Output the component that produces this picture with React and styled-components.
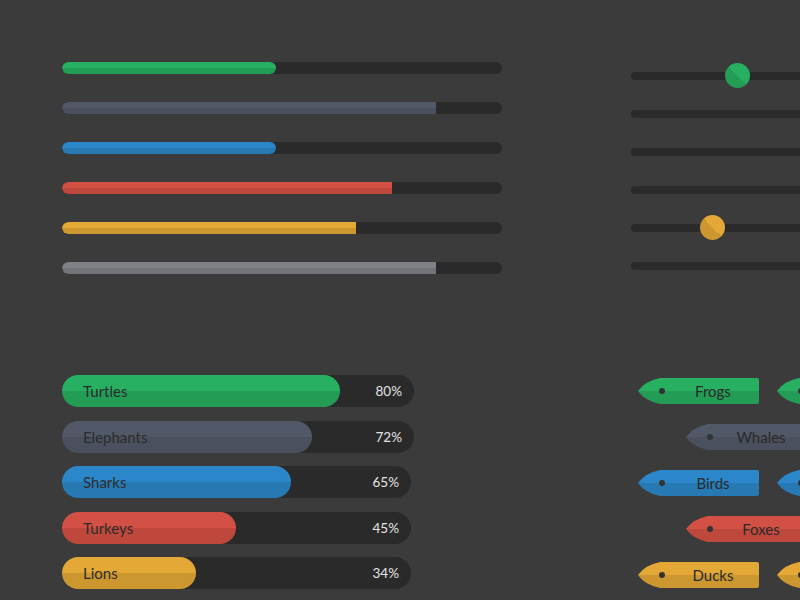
import React from 'react';
import styled, { createGlobalStyle } from 'styled-components';

const Global = createGlobalStyle`
  html, body {
    margin: 0;
    padding: 0;
    background: #3b3b3b;
    font-family: 'Lato', 'Noto Sans', sans-serif;
  }
`

const colors = {
  green: ['#27b061', '#239c56'],
  slate: ['#515867', '#4a505e'],
  blue: ['#2b87c9', '#2779b4'],
  red: ['#d35044', '#bf483d'],
  yellow: ['#e3a836', '#cc972f'],
  silver: ['#7e8185', '#717478'],
}

const twoTone = (c) => `linear-gradient(to bottom, ${colors[c][0]} 50%, ${colors[c][1]} 50%)`

const Page = styled.div`
  width: 800px;
  height: 600px;
  overflow: hidden;
  position: relative;
`
const Top = styled.div`
  height: 375px;
  display: flex;
  align-items: flex-start;
  box-sizing: border-box;
  padding-left: 62px;
  gap: 129px;
`
const Bars = styled.div`
  width: 440px;
  flex-shrink: 0;
  padding-top: 62px;
  display: flex;
  flex-direction: column;
  gap: 28px;
`
const Track = styled.div`
  height: 12px;
  border-radius: 6px;
  background: #2a2a2a;
  overflow: hidden;
`
const Fill = styled.div`
  height: 100%;
  background: ${p => twoTone(p.$c)};
  border-radius: ${p => p.$round ? '6px' : '6px 0 0 6px'};
`
const Sliders = styled.div`
  width: 440px;
  flex-shrink: 0;
  padding-top: 72px;
  display: flex;
  flex-direction: column;
  gap: 30px;
`
const Rail = styled.div`
  height: 8px;
  border-radius: 4px;
  background: #2a2a2a;
  position: relative;
`
const Knob = styled.div`
  position: absolute;
  top: -9px;
  width: 25px;
  height: 25px;
  border-radius: 50%;
  background: ${p => `linear-gradient(to bottom left, ${colors[p.$c][0]} 50%, ${colors[p.$c][1]} 50%)`};
`
const Bottom = styled.div`
  display: flex;
  align-items: flex-start;
  padding-left: 62px;
  gap: 224px;
`
const Stats = styled.div`
  width: 352px;
  flex-shrink: 0;
  display: flex;
  flex-direction: column;
  gap: 13.5px;
`
const StatTrack = styled.div`
  height: 32px;
  border-radius: 16px;
  background: #2a2a2a;
  display: flex;
  align-items: center;
  position: relative;
  width: ${p => p.$w}px;
`
const StatFill = styled.div`
  height: 100%;
  border-radius: 16px;
  background: ${p => twoTone(p.$c)};
  display: flex;
  align-items: center;
  box-sizing: border-box;
  padding-left: 21px;
  font-size: 15px;
  color: #2c2c2c;
  white-space: nowrap;
`
const Pct = styled.span`
  margin-left: auto;
  padding-right: 12px;
  font-size: 13.5px;
  color: #e4e4e4;
`
const Tags = styled.div`
  display: flex;
  flex-direction: column;
  gap: 20px;
  padding-top: 3px;
`
const TagRow = styled.div`
  display: flex;
  gap: 18px;
  padding-left: ${p => p.$shift ? 48 : 0}px;
`
const Tag = styled.div`
  width: 121px;
  height: 26px;
  flex-shrink: 0;
  background: ${p => twoTone(p.$c)};
  clip-path: path('M22 0 H119 Q121 0 121 2 V24 Q121 26 119 26 H22 Q7 23 0 13 Q7 3 22 0 Z');
  display: flex;
  align-items: center;
  box-sizing: border-box;
  padding-left: 21px;
  font-size: 15px;
  color: #2a2a2a;
`
const Dot = styled.span`
  width: 6px;
  height: 6px;
  border-radius: 50%;
  background: #333;
  flex-shrink: 0;
`
const TagText = styled.span`
  flex: 1;
  text-align: center;
  padding-left: 2px;
`

const bars = [
  ['green', 214, true], ['slate', 374], ['blue', 214, true],
  ['red', 330], ['yellow', 294], ['silver', 374],
]
const knobs = { 0: ['green', 94], 4: ['yellow', 69] }
const stats = [
  ['Turtles', 'green', 278, '80%', 352],
  ['Elephants', 'slate', 250, '72%', 352],
  ['Sharks', 'blue', 229, '65%', 349],
  ['Turkeys', 'red', 174, '45%', 349],
  ['Lions', 'yellow', 134, '34%', 349],
]
const tags = [
  ['Frogs', 'green', false],
  ['Whales', 'slate', true],
  ['Birds', 'blue', false],
  ['Foxes', 'red', true],
  ['Ducks', 'yellow', false],
]

const App = () => {
  return (
    <Page>
      <Global />
      <Top>
        <Bars>
          {bars.map(([c, w, round], i) => (
            <Track key={i}>
              <Fill $c={c} $round={round} style={{ width: w }} />
            </Track>
          ))}
        </Bars>
        <Sliders>
          {[0, 1, 2, 3, 4, 5].map(i => (
            <Rail key={i}>
              {knobs[i] && <Knob $c={knobs[i][0]} style={{ left: knobs[i][1] }} />}
            </Rail>
          ))}
        </Sliders>
      </Top>
      <Bottom>
        <Stats>
          {stats.map(([name, c, w, pct, tw]) => (
            <StatTrack key={name} $w={tw}>
              <StatFill $c={c} style={{ width: w }}>{name}</StatFill>
              <Pct>{pct}</Pct>
            </StatTrack>
          ))}
        </Stats>
        <Tags>
          {tags.map(([name, c, shift]) => (
            <TagRow key={name} $shift={shift}>
              <Tag $c={c}><Dot /><TagText>{name}</TagText></Tag>
              <Tag $c={c} aria-hidden="true"><Dot /></Tag>
            </TagRow>
          ))}
        </Tags>
      </Bottom>
    </Page>
  )
}

export default App;
